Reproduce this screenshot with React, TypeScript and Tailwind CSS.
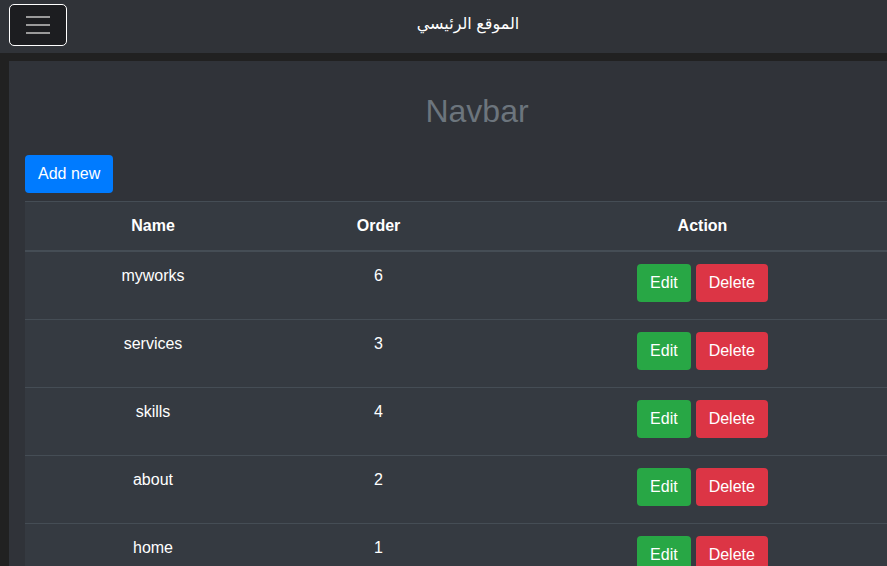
const items = [
  { name: "myworks", order: 6 },
  { name: "services", order: 3 },
  { name: "skills", order: 4 },
  { name: "about", order: 2 },
  { name: "home", order: 1 },
];

const App = () => {
  return (
    <div className="h-[566px] w-[887px] overflow-hidden bg-[#212121] font-['Liberation_Sans','DejaVu_Sans',sans-serif] text-base text-white">
      <div className="w-[945px]">
        {/* Top bar */}
        <nav className="relative flex h-[53px] w-[936px] items-start bg-[#303338] pl-[9px] pt-[4px]">
          <button className="flex h-[42px] w-[58px] flex-col items-center justify-center gap-[6px] rounded-[5px] border border-white bg-[#1c1d20]">
            <span className="block h-[2px] w-[24px] bg-[#9a9a9a]" />
            <span className="block h-[2px] w-[24px] bg-[#9a9a9a]" />
            <span className="block h-[2px] w-[24px] bg-[#9a9a9a]" />
          </button>
          <div dir="rtl" className="absolute left-0 right-0 top-[12px] text-center text-[16px] leading-6">
            الموقع الرئيسي
          </div>
        </nav>

        {/* Content */}
        <div className="ml-[9px] mt-[8px] bg-[#303339] px-4 pt-[31px] pb-10">
          <h2 className="text-center text-[32px] leading-[38px] text-[#6c757d]">Navbar</h2>
          <button className="mt-[25px] h-[38px] rounded-[4px] bg-[#007bff] px-[13px] text-base text-white">Add new</button>
          <table className="mt-[8px] w-[904px] border-collapse bg-[#353a41] text-center">
            <thead>
              <tr>
                <th className="w-[256px] border-t border-b-2 border-[#454d55] py-3 leading-6 font-bold">Name</th>
                <th className="w-[195px] border-t border-b-2 border-[#454d55] py-3 leading-6 font-bold">Order</th>
                <th className="border-t border-b-2 border-[#454d55] py-3 leading-6 font-bold">Action</th>
              </tr>
            </thead>
            <tbody>
              {items.map((item) => (
                <tr key={item.name} className="h-[68px] border-t border-[#454d55] align-top">
                  <td className="py-3 leading-6">{item.name}</td>
                  <td className="py-3 leading-6">{item.order}</td>
                  <td className="py-3">
                    <div className="flex justify-center gap-[5px]">
                      <button className="h-[38px] rounded-[4px] bg-[#28a745] px-[13px] text-white">Edit</button>
                      <button className="h-[38px] rounded-[4px] bg-[#dc3545] px-[13px] text-white">Delete</button>
                    </div>
                  </td>
                </tr>
              ))}
            </tbody>
          </table>
        </div>
      </div>
    </div>
  );
};

export default App;
